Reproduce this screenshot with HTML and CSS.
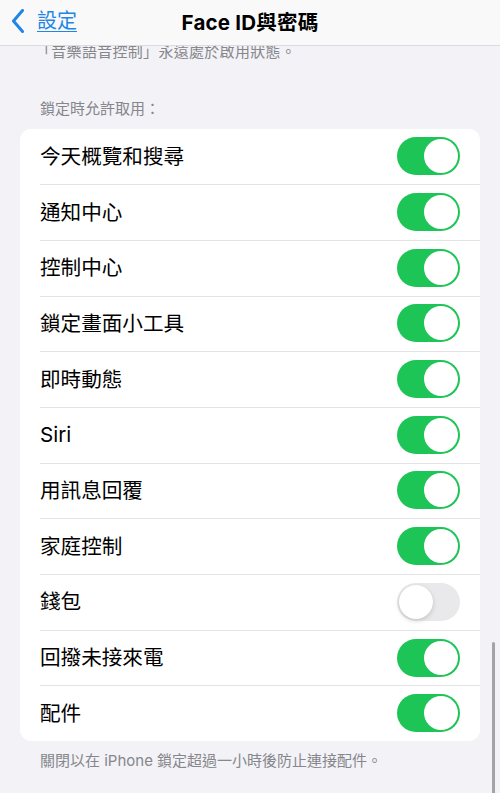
FILE: index.html
```html
<!DOCTYPE html>
<html lang="zh-Hant">
<head>
<meta charset="utf-8">
<title>Face ID與密碼</title>
<link rel="stylesheet" href="styles.css">
</head>
<body>
<div class="screen">
  <header class="navbar">
    <a class="back">
      <svg class="chev" width="14" height="24" viewBox="0 0 14 24"><path d="M11.5 1.5 L2.5 12 L11.5 22.5" fill="none" stroke="#1f85e6" stroke-width="3" stroke-linecap="round" stroke-linejoin="round"/></svg>
      <span class="back-label">設定</span>
    </a>
    <h1 class="title">Face ID與密碼</h1>
  </header>
  <div class="clip"><p class="note prev">「音樂語音控制」永遠處於啟用狀態。</p></div>
  <p class="section-head">鎖定時允許取用：</p>
  <ul class="card">
    <li class="row"><span class="label">今天概覽和搜尋</span><span class="toggle on"></span></li>
    <li class="row"><span class="label">通知中心</span><span class="toggle on"></span></li>
    <li class="row"><span class="label">控制中心</span><span class="toggle on"></span></li>
    <li class="row"><span class="label">鎖定畫面小工具</span><span class="toggle on"></span></li>
    <li class="row"><span class="label">即時動態</span><span class="toggle on"></span></li>
    <li class="row"><span class="label">Siri</span><span class="toggle on"></span></li>
    <li class="row"><span class="label">用訊息回覆</span><span class="toggle on"></span></li>
    <li class="row"><span class="label">家庭控制</span><span class="toggle on"></span></li>
    <li class="row"><span class="label">錢包</span><span class="toggle off"></span></li>
    <li class="row"><span class="label">回撥未接來電</span><span class="toggle on"></span></li>
    <li class="row"><span class="label">配件</span><span class="toggle on"></span></li>
  </ul>
  <p class="note foot">關閉以在 iPhone 鎖定超過一小時後防止連接配件。</p>
  <div class="scrollbar"></div>
</div>
</body>
</html>
```
FILE: styles.css
```css
* { box-sizing: border-box; }
html, body { margin: 0; padding: 0; }
body {
  background: #f2f2f7;
  font-family: "Inter", "Noto Sans CJK TC", sans-serif;
  color: #000;
  width: 500px;
  height: 793px;
  overflow: hidden;
}
.screen { position: relative; height: 793px; }
.navbar {
  height: 46px;
  background: #f9f9f9;
  border-bottom: 1px solid #dcdcde;
  display: flex;
  align-items: center;
  justify-content: center;
  position: relative;
}
.back {
  position: absolute;
  left: 11px;
  top: 9px;
  display: flex;
  align-items: center;
  gap: 12px;
  color: #1f85e6;
}
.chev { display: block; }
.back-label {
  font-size: 20px;
  line-height: 24px;
  text-decoration: underline;
  text-decoration-thickness: 1px;
  text-underline-offset: 3px;
}
.title {
  margin: 0;
  font-size: 20.5px;
  font-weight: 700;
  line-height: 24px;
  letter-spacing: 0.2px;
}
.clip { height: 14px; overflow: hidden; }
.note {
  margin: 0;
  color: #86868b;
  font-size: 15px;
  line-height: 20px;
  padding-left: 40px;
}
.prev { margin-top: -4px; padding-left: 36px; letter-spacing: 0.3px; }
.section-head {
  margin: 0;
  margin-top: 39px;
  padding-left: 40px;
  color: #86868b;
  font-size: 15px;
  line-height: 20px;
}
.card {
  list-style: none;
  margin: 9.5px 20px 0;
  padding: 0;
  background: #fff;
  border-radius: 11px;
  overflow: hidden;
}
.row {
  height: 55.7px;
  display: flex;
  align-items: center;
  justify-content: space-between;
  padding: 1px 20px 0 40px;
  position: relative;
}
.row + .row::before {
  content: "";
  position: absolute;
  left: 20px;
  right: 0;
  top: 0;
  height: 1px;
  background: #e3e3e6;
}
.label {
  font-size: 20.6px;
  line-height: 26px;
  margin-left: -20px;
}
.toggle {
  width: 63px;
  height: 38px;
  border-radius: 19px;
  position: relative;
  flex: none;
  margin-top: -1px;
}
.toggle::after {
  content: "";
  position: absolute;
  top: 2px;
  width: 34px;
  height: 34px;
  border-radius: 50%;
  background: #fff;
}
.toggle.on { background: #1dc456; }
.toggle.on::after { right: 2px; }
.toggle.off { background: #e9e9eb; }
.toggle.off::after { left: 2px; box-shadow: 0 2px 5px rgba(0,0,0,0.15), 0 0 1px rgba(0,0,0,0.1); }
.foot { margin-top: 10px; }
.scrollbar {
  position: absolute;
  left: 492px;
  top: 642px;
  width: 3px;
  height: 160px;
  border-radius: 2px;
  background: #a3a3a8;
}
```
